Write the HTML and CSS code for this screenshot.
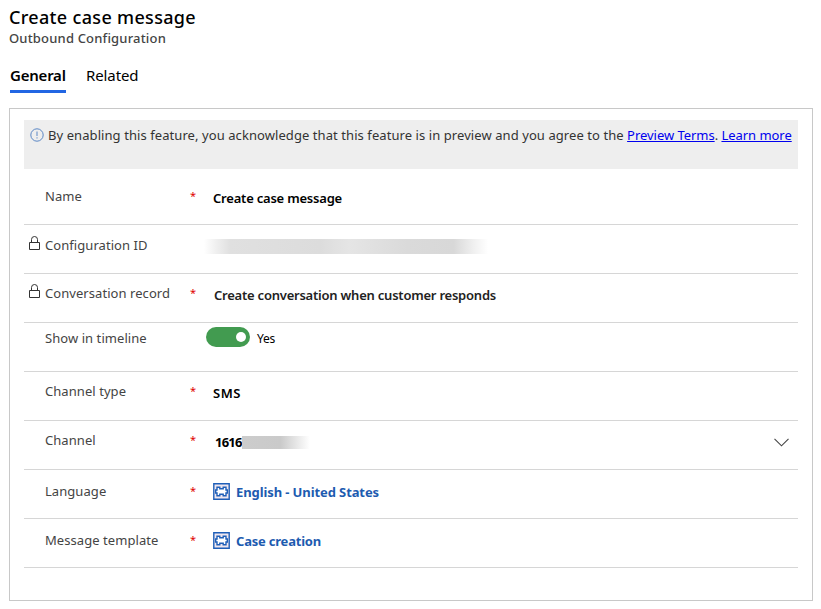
FILE: index.html
```html
<!DOCTYPE html>
<html lang="en">
<head>
<meta charset="utf-8">
<title>Create case message</title>
<link rel="stylesheet" href="styles.css">
</head>
<body>
<svg class="defs" width="0" height="0">
  <symbol id="lock" viewBox="0 0 12 15"><path d="M.5 6.500h10v7h-10zM2.500 6.500V3.500a3 3 0 0 1 6 0v3" fill="none" stroke="#333"/></symbol>
  <symbol id="puzzle" viewBox="0 0 17 17"><path fill="#efe6ee" stroke="#1f5fb8" stroke-width="1.400" d="M.8.800h15.400v15.400H.8z"/><path fill="#fff" stroke="#1f5fb8" stroke-width="1.400" d="M4 4.300h2.800v1.500h3.400V4.300H13v2.700h1.300v3H13v2.700h-2.800v-1.500H6.800v1.500H4V10H2.700V7H4z"/></symbol>
</svg>
<header class="header">
  <h1 class="title">Create case message</h1>
  <p class="subtitle">Outbound Configuration</p>
  <nav class="tabs">
    <span class="tab tab-active">General</span>
    <span class="tab">Related</span>
  </nav>
</header>
<main class="panel">
  <div class="notice">
    <svg class="info" viewBox="0 0 14 14"><circle cx="7" cy="7" r="6.200" fill="none" stroke="#5b87c5"/><path d="M7 3.500v4.500M7 9.300v1.200" stroke="#5b87c5"/></svg>
    <p class="notice-text"><span class="notice-copy">By enabling this feature, you acknowledge that this feature is in preview and you agree to the</span> <a href="#">Preview Terms</a>. <a href="#">Learn more</a></p>
  </div>
  <div class="row row-name">
    <span></span><span class="label">Name</span><span class="star">*</span>
    <span class="value">Create case message</span>
  </div>
  <div class="row row-id">
    <svg class="lock"><use href="#lock"/></svg><span class="label">Configuration ID</span><span></span>
    <span class="redacted"></span>
  </div>
  <div class="row row-record">
    <svg class="lock"><use href="#lock"/></svg><span class="label">Conversation record</span><span class="star">*</span>
    <span class="value value-readonly">Create conversation when customer responds</span>
  </div>
  <div class="row row-timeline">
    <span></span><span class="label">Show in timeline</span><span></span>
    <span class="switch"><span class="toggle"><span class="knob"></span></span><span class="switch-text">Yes</span></span>
  </div>
  <div class="row row-type">
    <span></span><span class="label">Channel type</span><span class="star">*</span>
    <span class="value value-sms">SMS</span>
  </div>
  <div class="row row-channel">
    <span></span><span class="label">Channel</span><span class="star">*</span>
    <span class="select"><span class="number">1616</span><span class="redacted-number"></span><svg class="chevron" viewBox="0 0 15 9"><path d="M.5.800l7 7 7-7" fill="none" stroke="#444" stroke-width="1.100"/></svg></span>
  </div>
  <div class="row row-language">
    <span></span><span class="label">Language</span><span class="star">*</span>
    <span class="lookup"><svg class="puzzle"><use href="#puzzle"/></svg><span>English - United States</span></span>
  </div>
  <div class="row row-template">
    <span></span><span class="label">Message template</span><span class="star">*</span>
    <span class="lookup lookup-case"><svg class="puzzle"><use href="#puzzle"/></svg><span>Case creation</span></span>
  </div>
</main>
</body>
</html>
```
FILE: styles.css
```css
* { box-sizing: border-box; }
body {
  margin: 0;
  background: #fff;
  color: #000;
  font: 13px/18px "Noto Sans", "Open Sans", sans-serif;
}
svg { display: block; }
.defs { position: absolute; }
.header { height: 108px; padding: 5px 9px 0; }
.title { margin: 0; font-size: 18px; line-height: 24px; font-weight: 500; letter-spacing: .328px; }
.subtitle { margin: 0; color: #444; font-weight: 500; line-height: 18px; letter-spacing: .18px; }
.tabs { display: flex; gap: 20px; margin: 17px 0 0 1px; }
.tab { height: 29px; font-size: 15px; line-height: 22px; letter-spacing: -.1px; }
.tab-active { width: 56px; font-weight: 600; letter-spacing: -.22px; border-bottom: 3px solid #2266e3; }
.panel { width: 804px; height: 493px; margin-left: 9px; padding: 11px 14px 0; border: 1px solid #c8c8c8; }
.notice { display: flex; gap: 4px; height: 49px; padding: 6px 0 0 6px; background: #eee; color: #333; }
.info { flex: none; width: 14px; height: 14px; margin-top: 2px; }
.notice-text { margin: 0; white-space: nowrap; letter-spacing: -.04px; }
.notice-copy { letter-spacing: .075px; }
.notice a { color: #0000ee; }
.row {
  display: grid;
  grid-template-columns: 21px 144px 17px 1fr;
  align-items: start;
  height: 49px;
  border-bottom: 1px solid #d6d6d6;
}
.row-name { height: 56px; padding-top: 18px; }
.row-id { padding-top: 11px; }
.row-record { padding-top: 10px; }
.row-timeline { padding-top: 6px; }
.row-type { padding-top: 10px; }
.row-channel { padding-top: 10px; }
.row-language, .row-template { padding-top: 12px; }
.label { color: #444; letter-spacing: .06px; white-space: nowrap; }
.star { color: #e00000; font-size: 11px; line-height: 17px; margin-left: 1px; }
.lock { width: 12px; height: 15px; margin: 0 0 0 5px; }
.value { margin: 2px 0 0 7px; font-weight: 600; letter-spacing: -.207px; }
.value-readonly { margin-left: 8px; color: #222; letter-spacing: -.224px; }
.value-sms { letter-spacing: .5px; }
.redacted {
  width: 290px;
  height: 15px;
  margin: 3px 0 0 -2px;
  background: linear-gradient(90deg, #fff, #f0f0f0 4%, #e0e0e0 9%, #dcdcdc 40%, #e5e5e5 50%, #dadada 70%, #d8d8d8 86%, #f0f0f0 93%, #fff 98%);
}
.switch { display: flex; align-items: flex-start; gap: 7px; }
.toggle { display: flex; justify-content: flex-end; width: 44px; height: 20px; margin-top: -2px; padding: 5px 4px; border-radius: 10px; background: #429b50; }
.knob { width: 10px; height: 10px; border-radius: 50%; background: #fff; }
.switch-text { margin-top: 1px; font-size: 12px; letter-spacing: -.236px; }
.select { display: flex; align-items: flex-start; margin-top: 2px; padding: 0 9px 0 9px; }
.number { width: 27px; font-weight: 700; letter-spacing: -.8px; }
.redacted-number { width: 70px; height: 13px; margin-top: 3px; background: linear-gradient(90deg, #ccc, #cacaca 55%, #fff 97%); }
.chevron { width: 15px; height: 9px; margin: 5px 0 0 auto; }
.lookup { display: flex; gap: 6px; margin: 1px 0 0 7px; color: #1d5bb0; font-weight: 700; letter-spacing: -.1px; }
.lookup-case { letter-spacing: -.209px; }
.puzzle { width: 17px; height: 17px; }
```
